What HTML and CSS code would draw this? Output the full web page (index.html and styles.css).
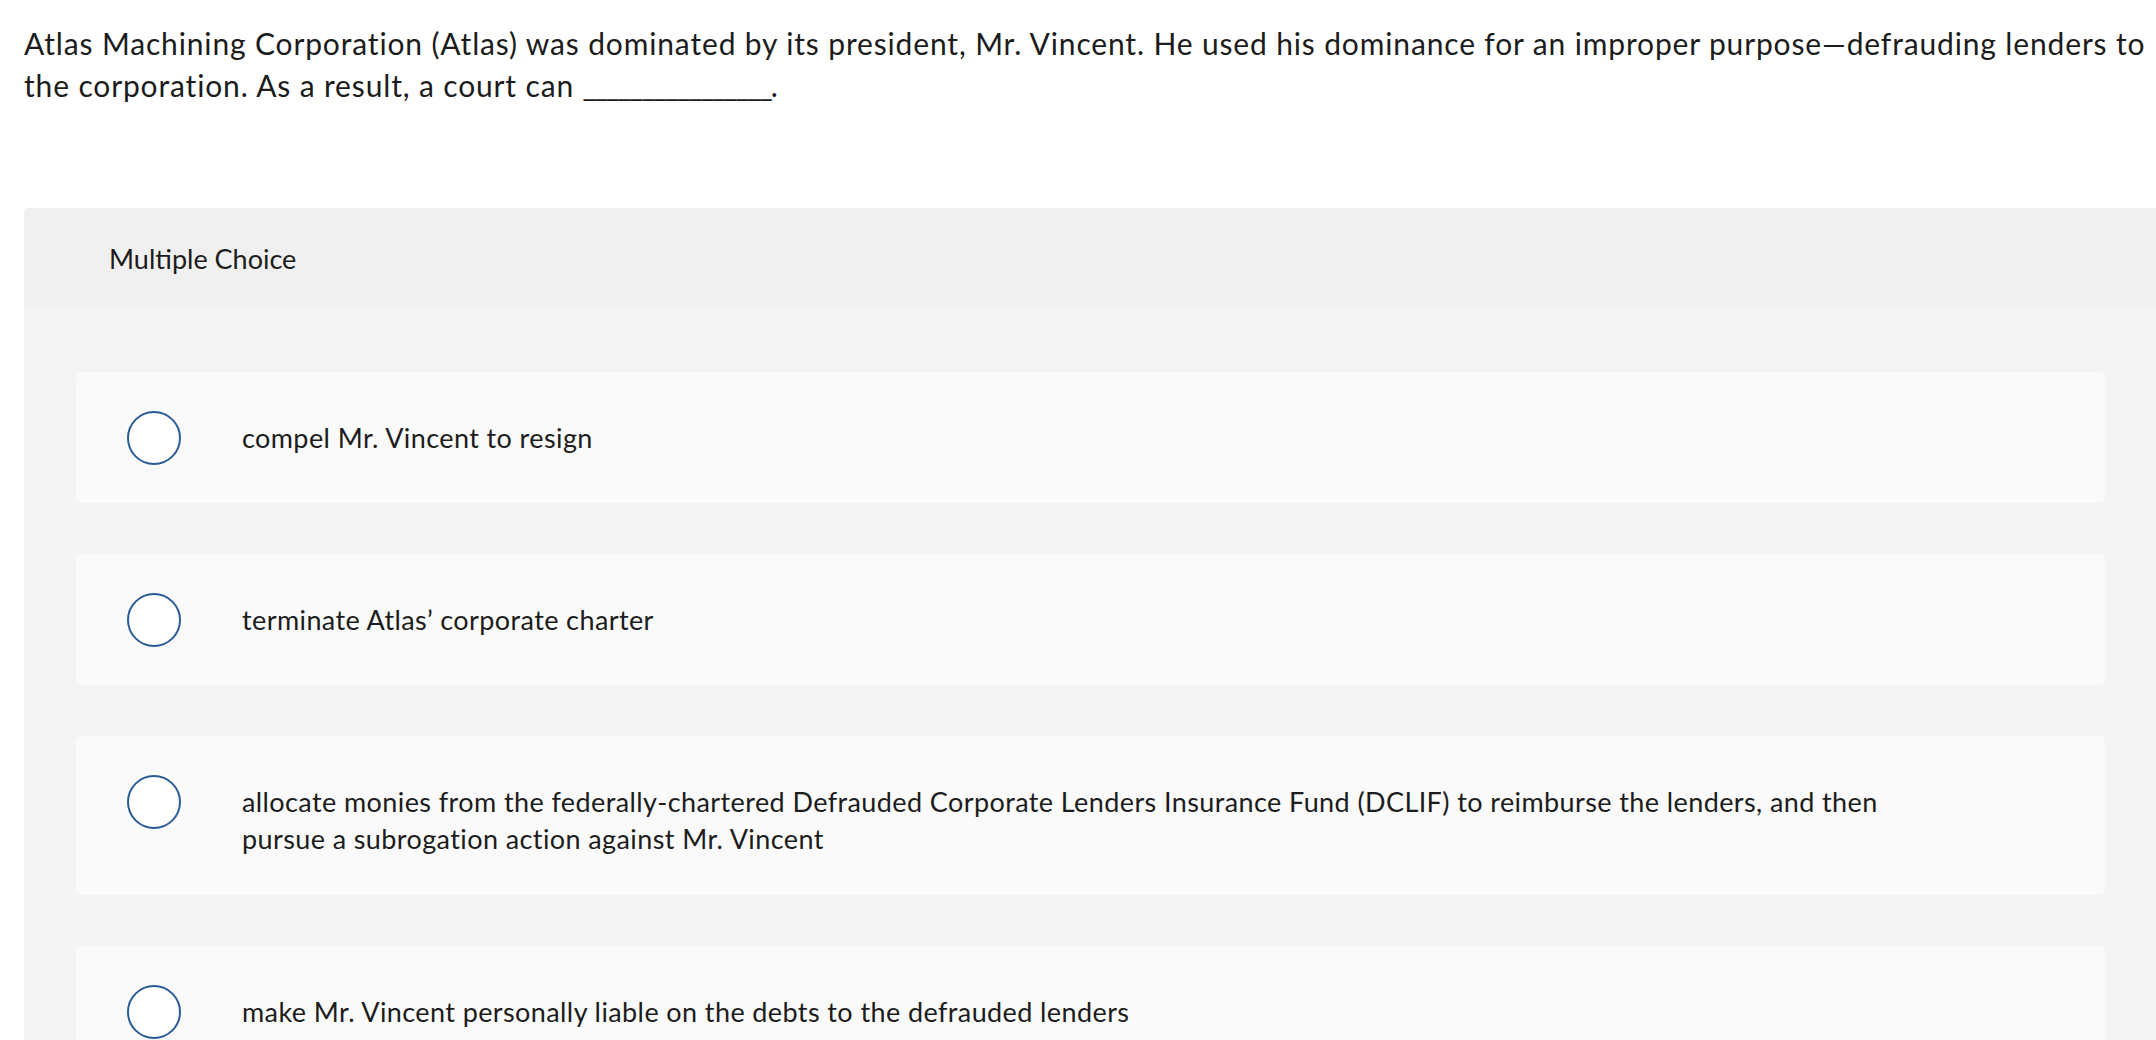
FILE: index.html
```html
<!DOCTYPE html>
<html lang="en">
<head>
<meta charset="utf-8">
<title>Multiple Choice</title>
<link rel="stylesheet" href="styles.css">
</head>
<body>
<main class="page">
  <p class="prompt">Atlas Machining Corporation (Atlas) was dominated by its president, Mr. Vincent. He used his dominance for an improper purpose—defrauding lenders to the corporation. As a result, a court can <span class="blank">________________</span>.</p>

  <section class="question">
    <header class="question-head">Multiple Choice</header>
    <div class="choices">
      <label class="choice">
        <span class="radio"></span>
        <span class="choice-text">compel Mr. Vincent to resign</span>
      </label>
      <label class="choice">
        <span class="radio"></span>
        <span class="choice-text">terminate Atlas’ corporate charter</span>
      </label>
      <label class="choice">
        <span class="radio"></span>
        <span class="choice-text">allocate monies from the federally-chartered Defrauded Corporate Lenders Insurance Fund (DCLIF) to reimburse the lenders, and then pursue a subrogation action against Mr. Vincent</span>
      </label>
      <label class="choice">
        <span class="radio"></span>
        <span class="choice-text">make Mr. Vincent personally liable on the debts to the defrauded lenders</span>
      </label>
    </div>
  </section>
</main>
</body>
</html>
```

FILE: styles.css
```css
html, body {
  margin: 0;
  padding: 0;
  background: #ffffff;
  overflow: hidden;
}

body {
  font-family: "Lato", "Open Sans", "Liberation Sans", sans-serif;
  color: #1c1c1c;
}

.page {
  padding: 22px 0 0 24px;
}

.prompt {
  margin: 0 -16px 0 0;
  font-size: 30px;
  line-height: 42px;
  letter-spacing: 0.85px;
}

.blank {
  letter-spacing: -2px;
}

.question {
  margin-top: 102px;
  border-top-left-radius: 4px;
  overflow: hidden;
}

.question-head {
  display: flex;
  align-items: center;
  height: 100px;
  padding-left: 85px;
  background: #f0f0f0;
  font-size: 27px;
}

.choices {
  display: flex;
  flex-direction: column;
  gap: 51px;
  padding: 64px 51px 0 52px;
  background: #f4f4f4;
  min-height: 800px;
}

.choice {
  display: flex;
  align-items: flex-start;
  padding: 39px 170px 38px 51px;
  background: #fafafa;
  border-radius: 6px;
}

.radio {
  flex: none;
  width: 50px;
  height: 50px;
  border: 2px solid #2b5b97;
  border-radius: 50%;
  background: #ffffff;
}

.choice-text {
  margin-left: 61px;
  padding-top: 8px;
  font-size: 27px;
  line-height: 37px;
  letter-spacing: 0.4px;
}
```
